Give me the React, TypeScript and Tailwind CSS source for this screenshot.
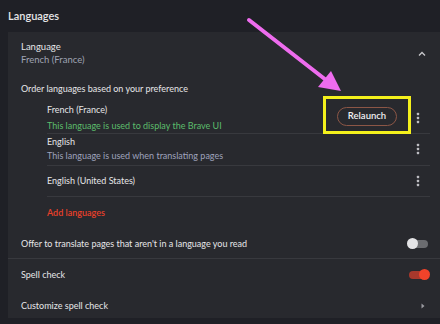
import React from "react";

const Kebab = () => (
  <svg width="4" height="12" viewBox="0 0 4 12" className="text-[#bdbdc2]">
    <rect x="0.8" y="0.8" width="2.4" height="2.4" rx="0.8" fill="currentColor" />
    <rect x="0.8" y="4.8" width="2.4" height="2.4" rx="0.8" fill="currentColor" />
    <rect x="0.8" y="8.8" width="2.4" height="2.4" rx="0.8" fill="currentColor" />
  </svg>
);

const Toggle = ({ on }: { on: boolean }) =>
  on ? (
    <div className="relative w-[21px] h-[12px] flex items-center">
      <div className="w-[19px] h-[8px] rounded-full bg-[#a8382c]" />
      <div className="absolute right-0 w-[11px] h-[11px] rounded-full bg-[#f2432a]" />
    </div>
  ) : (
    <div className="relative w-[21px] h-[12px] flex items-center">
      <div className="w-[19px] h-[8px] ml-[2px] rounded-full bg-[#6b6c70]" />
      <div className="absolute left-0 w-[11px] h-[11px] rounded-full bg-[#e4e4e6]" />
    </div>
  );

export default function App() {
  return (
    <div
      className="relative w-[440px] h-[324px] overflow-hidden bg-[#1f2026] text-[#e6e6e8]"
      style={{ fontFamily: "Lato, 'Open Sans', sans-serif" }}
    >
      {/* Page heading */}
      <div className="h-[32px] pl-[8px] flex items-center text-[11px] font-semibold">
        Languages
      </div>

      {/* Card */}
      <div className="ml-[8px] h-[286px] bg-[#28292e] text-[9px]">
        <div className="pt-[8px] pl-[13px] pr-[12px] flex justify-between">
          <div className="text-[9.5px]">
            <div className="h-[13px] leading-[13px]">Language</div>
            <div className="h-[13px] leading-[13px] text-[#9fa3b3]">French (France)</div>
          </div>
          <svg width="8" height="6" viewBox="0 0 8 6" className="mt-[11px] mr-[2px]">
            <path d="M1 4.5 L4 1.5 L7 4.5" stroke="#c8c8cc" strokeWidth="1.3" fill="none" />
          </svg>
        </div>

        <div className="mt-[16px] pl-[13px] h-[13px] leading-[13px]">
          Order languages based on your preference
        </div>

        {/* Language list */}
        <div className="mt-[5px] ml-[39px] mr-[10px]">
          <div className="h-[34px] flex items-center justify-between border-b border-[#38393e]">
            <div className="pt-[2px]">
              <div className="h-[14px] leading-[14px]">French (France)</div>
              <div className="h-[14px] leading-[14px] mt-[2px] text-[#5cbd6c]">
                This language is used to display the Brave UI
              </div>
            </div>
            <div className="flex items-center">
              <div className="w-[60px] h-[19px] rounded-full border-[1.5px] border-[#8c5646] flex items-center justify-center text-[9.5px] font-semibold text-[#f0f0f2]">
                Relaunch
              </div>
              <div className="ml-[19px] mr-[10px] pt-[3px]">
                <Kebab />
              </div>
            </div>
          </div>

          <div className="h-[32px] flex items-center justify-between border-b border-[#38393e]">
            <div className="-mt-[2px]">
              <div className="h-[14px] leading-[14px]">English</div>
              <div className="h-[14px] leading-[14px] text-[#9fa3bd]">
                This language is used when translating pages
              </div>
            </div>
            <div className="mr-[10px] -mt-[2px]">
              <Kebab />
            </div>
          </div>

          <div className="h-[31px] flex items-center justify-between border-b border-[#38393e]">
            <div>English (United States)</div>
            <div className="mr-[10px]">
              <Kebab />
            </div>
          </div>

          <div className="h-[32px] flex items-center text-[#e8402a] font-semibold">Add languages</div>
        </div>

        <div className="h-[30px] pl-[13px] pr-[12px] flex items-center justify-between border-b border-[#38393e]">
          <div>Offer to translate pages that aren't in a language you read</div>
          <Toggle on={false} />
        </div>

        <div className="h-[31px] pl-[13px] pr-[10px] flex items-center justify-between">
          <div>Spell check</div>
          <Toggle on={true} />
        </div>

        <div className="h-[28px] pl-[13px] pr-[15px] pt-[3px] flex items-center justify-between">
          <div>Customize spell check</div>
          <svg width="4" height="6" viewBox="0 0 4 6">
            <path d="M0.5 0.5 L3.5 3 L0.5 5.5 Z" fill="#9a9aa0" />
          </svg>
        </div>
      </div>

      {/* Annotation overlays */}
      <div className="absolute left-[323px] top-[96px] w-[88px] h-[38px] border-[3px] border-[#f4f01c]" />
      <svg className="absolute left-0 top-0" width="440" height="324" viewBox="0 0 440 324">
        <line x1="249" y1="20" x2="326" y2="80" stroke="#ee6cee" strokeWidth="4" strokeLinecap="round" />
        <polygon points="341,91 318,87 331,71" fill="#ee6cee" />
      </svg>
    </div>
  );
}
